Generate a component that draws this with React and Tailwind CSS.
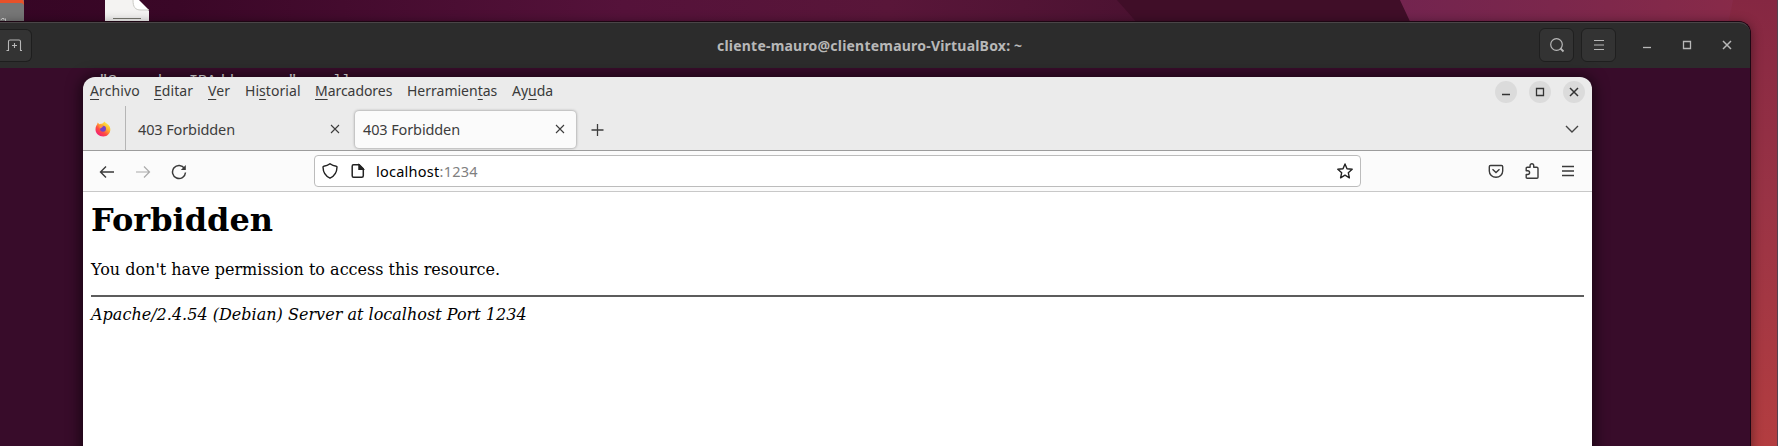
import React from "react";

const MENUS = [
  { before: "", key: "A", after: "rchivo", box: "w-[64px] tracking-[0.1px]" },
  { before: "", key: "E", after: "ditar", box: "w-[54px] tracking-[0.05px]" },
  { before: "", key: "V", after: "er", box: "w-[37px] tracking-[0.1px]" },
  { before: "Hi", key: "s", after: "torial", box: "w-[70px] tracking-[0.05px]" },
  { before: "", key: "M", after: "arcadores", box: "w-[92px] tracking-[-0.05px]" },
  { before: "Herramien", key: "t", after: "as", box: "w-[105px] tracking-[0px]" },
  { before: "Ay", key: "u", after: "da", box: "w-[60px] tracking-[0px]" },
];

function Icon({ size = 16, className = "", sw = 1.3, children }) {
  return (
    <svg
      width={size}
      height={size}
      viewBox={`0 0 ${size} ${size}`}
      fill="none"
      stroke="currentColor"
      strokeWidth={sw}
      className={`shrink-0 ${className}`}
    >
      {children}
    </svg>
  );
}

const Minimize = () => (
  <Icon><path d="M4 10.5h8" /></Icon>
);
const Maximize = () => (
  <Icon><path d="M4.5 4.5h7v7h-7z" /></Icon>
);
const Close = () => (
  <Icon sw={1.5}><path d="M4 4l8 8M12 4l-8 8" /></Icon>
);

function Wallpaper() {
  return (
    <svg width="1778" height="446" viewBox="0 0 1778 446" className="absolute left-0 top-0">
      <defs>
        <linearGradient id="base" x1="0" x2="1">
          <stop offset="0" stopColor="#360625" />
          <stop offset="0.1" stopColor="#3a0727" />
          <stop offset="0.35" stopColor="#55123a" />
          <stop offset="0.5" stopColor="#591639" />
          <stop offset="0.65" stopColor="#4b1231" />
        </linearGradient>
        <linearGradient id="pink" x1="0" x2="1">
          <stop offset="0" stopColor="#73244f" />
          <stop offset="0.4" stopColor="#7b274c" />
          <stop offset="1" stopColor="#8b2b48" />
        </linearGradient>
        <linearGradient id="red" x1="0" y1="0" x2="0" y2="1">
          <stop offset="0" stopColor="#852742" />
          <stop offset="0.45" stopColor="#993345" />
          <stop offset="1" stopColor="#b33d40" />
        </linearGradient>
      </defs>
      <rect width="1778" height="446" fill="url(#base)" />
      <path d="M1117 0h283l30 60h-260z" fill="#400e28" />
      <path d="M1400 0h378v60h-350z" fill="url(#pink)" />
      <path d="M1733 0h45v446h-50V24z" fill="url(#red)" />
      <path d="M0 0h24v22H0z" fill="#777" />
      <path d="M0 0h23c1 2 1 3 1 5-1-2-3-2-5-2H0z" fill="#e8512a" />
      <path d="M1 20l1-1.500h2v1.500M5.500 18.500v3" stroke="#ccc" fill="none" />
      <path d="M105 0h33l11 11v11h-44z" fill="#f4f3f2" />
      <path d="M133 0c0 7 2 10 8 10h8L139 0z" fill="#fff" />
      <path d="M133 0c0 7 2 10 8 10h8" stroke="#c9c9c4" fill="none" />
      <path d="M113 18.5h28" stroke="#77776f" />
      <path d="M1777.5 0v446" stroke="#55404f" />
    </svg>
  );
}

function TerminalTitleBar() {
  return (
    <header className="flex h-[46px] items-center justify-between rounded-tr-[11px] border-t border-[#4a4547] bg-[#2c2c2c] pb-px text-[#b8b8b8]">
      <div className="flex w-[717px]">
        <div className="flex h-[33px] w-8 items-center justify-center rounded-r-md border border-l-0 border-[#1e1e1e] bg-[#333333] pr-[3px]">
          <Icon sw={1.1}>
            <path d="M.5 13.500h2v-9q0-1.500 1.500-1.500h9q1.500 0 1.500 1.500v9h1.500M8.500 6v5M6 8.500h5" />
          </Icon>
        </div>
      </div>
      <h1 className="w-[320px] whitespace-nowrap text-[14px] font-bold tracking-[0.21px]">
        cliente-mauro@clientemauro-VirtualBox: ~
      </h1>
      <div className="flex flex-1 items-center justify-end pr-[15px]">
        <div className="mr-[7px] flex h-[34px] w-[35px] items-center justify-center rounded-md border border-[#1f1f1f] bg-[#333333]">
          <Icon sw={1.2}>
            <circle cx="7.500" cy="7.500" r="5.800" />
            <path d="M11.500 11.500l3 3" strokeWidth="1.800" />
          </Icon>
        </div>
        <div className="mr-[23px] flex h-[34px] w-[35px] items-center justify-center rounded-md border border-[#1f1f1f] bg-[#333333]">
          <Icon sw={1}>
            <path d="M3 3.500h10M3 8h10M3 12.500h10" />
          </Icon>
        </div>
        <div className="flex gap-6">
          <Minimize />
          <Maximize />
          <Close />
        </div>
      </div>
    </header>
  );
}

function FirefoxLogo() {
  return (
    <svg width="16" height="16" viewBox="0 0 16 16">
      <defs>
        <linearGradient id="fox" x1="0.85" y1="0.1" x2="0.2" y2="0.95">
          <stop offset="0" stopColor="#fff04a" />
          <stop offset="0.35" stopColor="#ffb02e" />
          <stop offset="0.65" stopColor="#ff4b42" />
          <stop offset="1" stopColor="#f01d79" />
        </linearGradient>
      </defs>
      <path d="M.5 8.500C.5 6 1.300 4.500 2.200 3.200L2.700 1.500 4.300 3.200 6 2.800C7 3 8 2.500 9.500.5c1 2 4 2.500 5.300 5.200 1.800 4.500-1 9.800-6.500 9.800C4 15.500.5 12.500.5 8.500z" fill="url(#fox)" />
      <circle cx="8" cy="7.800" r="3" fill="#7542c9" />
      <path d="M4.300 5.300c1.500-.8 3-.5 4.200.4-2 .3-2 1.500-3.500 1.800z" fill="#ff9640" />
    </svg>
  );
}

function Tab({ title, active }) {
  return (
    <div
      className={`flex h-[37px] w-[221px] items-center justify-between pl-2 pr-2 ${
        active ? "rounded-[4px] bg-[#fbfbfb] shadow-[0_0_3px_rgba(0,0,0,0.45)]" : ""
      }`}
    >
      <span className="whitespace-nowrap pt-[2px] text-[14.5px] tracking-[-0.12px] text-[#3d3d3d]">{title}</span>
      <Icon sw={1.1} className="text-[#3d3d3d]">
        <path d="M4 4l8 8M12 4l-8 8" />
      </Icon>
    </div>
  );
}

function WindowButton({ children }) {
  return (
    <button className="flex size-[22px] items-center justify-center rounded-full bg-[#dbdbdb] text-[#333]">
      {children}
    </button>
  );
}

function MenuBar() {
  return (
    <div className="flex h-[29px] items-center justify-between pl-[7px] pr-[7px]">
      <nav className="flex pb-[2px] text-[14px] text-[#3a3a3a]">
        {MENUS.map((m) => (
          <span key={m.key + m.after} className={`whitespace-nowrap ${m.box}`}>
            {m.before}
            <span className="underline decoration-1 underline-offset-[3px]">{m.key}</span>
            {m.after}
          </span>
        ))}
      </nav>
      <div className="flex gap-3">
        <WindowButton><Minimize /></WindowButton>
        <WindowButton><Maximize /></WindowButton>
        <WindowButton><Close /></WindowButton>
      </div>
    </div>
  );
}

function TabStrip() {
  return (
    <div className="flex h-[45px] items-center border-b border-[#9c9c9c]">
      <div className="flex h-full w-[43px] items-center justify-center border-r border-[#b5b5b5] pr-[3px] pt-[2px]">
        <FirefoxLogo />
      </div>
      <div className="flex gap-1 pl-1 pt-[2px]">
        <Tab title="403 Forbidden" />
        <Tab title="403 Forbidden" active />
      </div>
      <Icon className="ml-[14px] mt-[3px] text-[#3d3d3d]" sw={1.3}>
        <path d="M7.500 2v12M1.500 8h12" />
      </Icon>
      <Icon className="ml-auto mr-3 mt-px text-[#444]" sw={1.4}>
        <path d="M2 5l6 6 6-6" />
      </Icon>
    </div>
  );
}

function AddressBar() {
  return (
    <div className="flex h-[32px] w-[1047px] items-center rounded-[4px] border border-[#bcbcbc] bg-white pl-[7px] pr-[7px] text-[#222]">
      <Icon sw={1.4}>
        <path d="M8 .8c1.700 1.400 4 2.300 6.300 2.500.5 0 .7.400.7.800C14.900 9 13 13 8 15.200 3 13 1.100 9 1 4.100c0-.4.2-.8.7-.8C4 3.100 6.300 2.200 8 .8z" />
      </Icon>
      <Icon sw={1.500} className="ml-3">
        <path d="M3.500 1.800h5.700l4.100 4.100v6.800q0 1.500-1.500 1.500h-8.300q-1.300 0-1.300-1.500V3.300q0-1.500 1.300-1.500z" />
        <path d="M9 2v4.200h4.200z" fill="currentColor" />
      </Icon>
      <span className="ml-[10px] whitespace-nowrap pt-[2px] text-[14.5px] tracking-[0.25px] text-black">
        localhost<span className="text-[#808080]">:1234</span>
      </span>
      <Icon sw={1.400} className="ml-auto">
        <path strokeLinejoin="round" d="M8 1l2 4.700 5.200.5-3.900 3.500 1.100 5.100L8 12.200l-4.400 2.600 1.100-5.100L.8 6.200 6 5.700z" />
      </Icon>
    </div>
  );
}

function Toolbar() {
  return (
    <div className="flex h-[41px] items-center border-b border-[#c8c8c8] bg-[#fbfbfb] pl-4 pr-4 text-[#3a3a3a]">
      <Icon sw={1.4} className="mt-px"><path d="M1.500 8H15M7 2.500L1.500 8 7 13.500" /></Icon>
      <Icon sw={1.2} className="ml-5 mt-px text-[#aaa]"><path d="M1 8h13.500M9 2.500L14.500 8 9 13.500" /></Icon>
      <Icon sw={1.5} className="ml-5 mt-px">
        <path d="M13.500 4.500A6.500 6.500 0 1 0 14.500 8.500" />
        <path d="M14.800 1v5h-5z" fill="currentColor" stroke="none" />
      </Icon>
      <div className="ml-[127px]"><AddressBar /></div>
      <div className="ml-auto flex gap-5">
        <Icon sw={1.4}>
          <path d="M2.500 2.500h11q1.200 0 1.200 1.200V8A6.700 6.300 0 0 1 1.300 8V3.700q0-1.200 1.200-1.200z" />
          <path d="M4.500 6.200L8 9.500l3.500-3.300" />
        </Icon>
        <Icon sw={1.4}>
          <path strokeLinejoin="round" d="M2.200 5.200q0-1 1-1h2.900V2.500a1.800 1.800 0 0 1 3.600 0v1.700h3.100q1.200 0 1.200 1.200v8.800q0 1-1 1H3.200q-1 0-1-1v-2.700h1.500a1.900 1.900 0 0 0 0-3.800H2.200z" />
        </Icon>
        <Icon sw={1.4}><path d="M2 3.500h12M2 8h12M2 12.500h12" /></Icon>
      </div>
    </div>
  );
}

function ForbiddenPage() {
  return (
    <article className="px-2 pt-[9px] font-['DejaVu_Serif',serif] text-[16px] leading-[19px] text-black">
      <h1 className="text-[32px] font-bold leading-[38px]">Forbidden</h1>
      <p className="mt-[21px]">You don't have permission to access this resource.</p>
      <hr className="mt-[16px] h-[2px] border-0 bg-[#5c5c5c]" />
      <address className="mt-2 italic tracking-[0.02px]">Apache/2.4.54 (Debian) Server at localhost Port 1234</address>
    </article>
  );
}

export default function App() {
  return (
    <div className="relative h-[446px] w-[1778px] overflow-hidden font-['Noto_Sans',sans-serif]">
      <Wallpaper />
      <section className="absolute left-0 top-[21px] h-[440px] w-[1751px] rounded-tr-xl border-r border-t border-[#1d0613] bg-[#380c2a] shadow-[0_2px_12px_rgba(0,0,0,0.45)]">
        <TerminalTitleBar />
        <pre className="pl-[99px] pt-[4px] font-['Liberation_Mono',monospace] text-[15px] leading-5 text-[#eee]">
          {'"SecondaryIPAddresses": null'}
        </pre>
      </section>
      <section className="absolute left-[83px] top-[77px] h-[400px] w-[1509px] overflow-hidden rounded-t-xl bg-[#ebebeb] shadow-[0_2px_14px_3px_rgba(0,0,0,0.55)]">
        <MenuBar />
        <TabStrip />
        <Toolbar />
        <main className="h-full bg-white">
          <ForbiddenPage />
        </main>
      </section>
    </div>
  );
}
